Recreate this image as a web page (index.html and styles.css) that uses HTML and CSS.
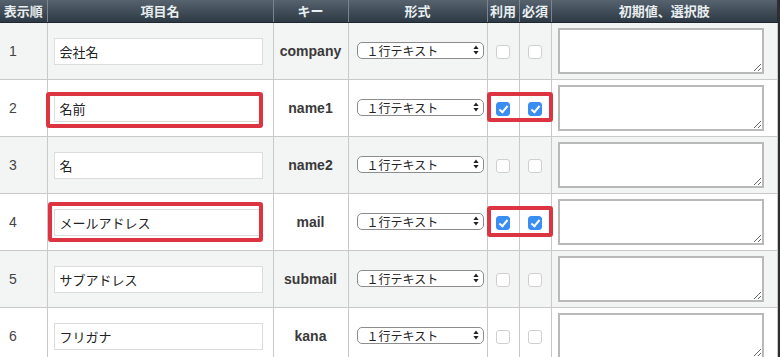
FILE: index.html
```html
<!DOCTYPE html>
<html lang="ja">
<head>
    <meta charset="UTF-8">
    <meta name="viewport" content="width=device-width, initial-scale=1.0">
    <title>項目設定</title>
    <link rel="stylesheet" href="styles.css">
</head>
<body>
    <div class="sheet">
        <table class="fields">
            <colgroup>
                <col class="c-order">
                <col class="c-label">
                <col class="c-key">
                <col class="c-type">
                <col class="c-flag">
                <col class="c-flag">
                <col class="c-value">
            </colgroup>
            <thead>
                <tr>
                    <th>表示順</th>
                    <th>項目名</th>
                    <th>キー</th>
                    <th>形式</th>
                    <th>利用</th>
                    <th>必須</th>
                    <th>初期値、選択肢</th>
                </tr>
            </thead>
            <tbody>
                <tr>
                    <td class="num">1</td>
                    <td><input class="label-input" type="text" value="会社名"></td>
                    <td class="key">company</td>
                    <td><span class="select-wrap"><select class="type-select"><option>１行テキスト</option></select><svg class="arrows" viewBox="0 0 6 10" width="6" height="10"><path d="M3 0.5 L5.6 4 H0.4 Z M3 9.5 L5.6 6 H0.4 Z" fill="#222"/></svg></span></td>
                    <td class="flag"><input type="checkbox" class="chk"></td>
                    <td class="flag"><input type="checkbox" class="chk"></td>
                    <td class="value"><textarea class="value-area"></textarea></td>
                </tr>
                <tr>
                    <td class="num">2</td>
                    <td><input class="label-input" type="text" value="名前"></td>
                    <td class="key">name1</td>
                    <td><span class="select-wrap"><select class="type-select"><option>１行テキスト</option></select><svg class="arrows" viewBox="0 0 6 10" width="6" height="10"><path d="M3 0.5 L5.6 4 H0.4 Z M3 9.5 L5.6 6 H0.4 Z" fill="#222"/></svg></span></td>
                    <td class="flag"><input type="checkbox" class="chk" checked></td>
                    <td class="flag"><input type="checkbox" class="chk" checked></td>
                    <td class="value"><textarea class="value-area"></textarea></td>
                </tr>
                <tr>
                    <td class="num">3</td>
                    <td><input class="label-input" type="text" value="名"></td>
                    <td class="key">name2</td>
                    <td><span class="select-wrap"><select class="type-select"><option>１行テキスト</option></select><svg class="arrows" viewBox="0 0 6 10" width="6" height="10"><path d="M3 0.5 L5.6 4 H0.4 Z M3 9.5 L5.6 6 H0.4 Z" fill="#222"/></svg></span></td>
                    <td class="flag"><input type="checkbox" class="chk"></td>
                    <td class="flag"><input type="checkbox" class="chk"></td>
                    <td class="value"><textarea class="value-area"></textarea></td>
                </tr>
                <tr>
                    <td class="num">4</td>
                    <td><input class="label-input" type="text" value="メールアドレス"></td>
                    <td class="key">mail</td>
                    <td><span class="select-wrap"><select class="type-select"><option>１行テキスト</option></select><svg class="arrows" viewBox="0 0 6 10" width="6" height="10"><path d="M3 0.5 L5.6 4 H0.4 Z M3 9.5 L5.6 6 H0.4 Z" fill="#222"/></svg></span></td>
                    <td class="flag"><input type="checkbox" class="chk" checked></td>
                    <td class="flag"><input type="checkbox" class="chk" checked></td>
                    <td class="value"><textarea class="value-area"></textarea></td>
                </tr>
                <tr>
                    <td class="num">5</td>
                    <td><input class="label-input" type="text" value="サブアドレス"></td>
                    <td class="key">submail</td>
                    <td><span class="select-wrap"><select class="type-select"><option>１行テキスト</option></select><svg class="arrows" viewBox="0 0 6 10" width="6" height="10"><path d="M3 0.5 L5.6 4 H0.4 Z M3 9.5 L5.6 6 H0.4 Z" fill="#222"/></svg></span></td>
                    <td class="flag"><input type="checkbox" class="chk"></td>
                    <td class="flag"><input type="checkbox" class="chk"></td>
                    <td class="value"><textarea class="value-area"></textarea></td>
                </tr>
                <tr>
                    <td class="num">6</td>
                    <td><input class="label-input" type="text" value="フリガナ"></td>
                    <td class="key">kana</td>
                    <td><span class="select-wrap"><select class="type-select"><option>１行テキスト</option></select><svg class="arrows" viewBox="0 0 6 10" width="6" height="10"><path d="M3 0.5 L5.6 4 H0.4 Z M3 9.5 L5.6 6 H0.4 Z" fill="#222"/></svg></span></td>
                    <td class="flag"><input type="checkbox" class="chk"></td>
                    <td class="flag"><input type="checkbox" class="chk"></td>
                    <td class="value"><textarea class="value-area"></textarea></td>
                </tr>
            </tbody>
        </table>

        <!-- annotation boxes -->
        <div class="mark mark-name2"></div>
        <div class="mark mark-flags2"></div>
        <div class="mark mark-mail"></div>
        <div class="mark mark-flags4"></div>
    </div>
</body>
</html>
```

FILE: styles.css
```css
:root {
    --line: #c9c9c9;
    --row-alt: #f3f4f4;
    --mark: #dc3441;
    --text: #333;
}

body {
    margin: 0;
    background: #2e2e2e;
    font-family: "Liberation Sans", "Noto Sans CJK JP", sans-serif;
    color: var(--text);
    height: 357px;
    overflow: hidden;
}

.sheet {
    position: relative;
    width: 777px;
    background: #fff;
}

.fields {
    width: 777px;
    border-collapse: collapse;
    table-layout: fixed;
}

.c-order { width: 47px; }
.c-label { width: 226px; }
.c-key { width: 75px; }
.c-type { width: 139px; }
.c-flag { width: 32px; }
.c-value { width: 226px; }

.fields th {
    height: 22px;
    padding: 0;
    background: linear-gradient(#56636e, #2d3944);
    color: #e9eef1;
    font-family: "Noto Sans CJK JP", sans-serif;
    font-size: 13px;
    font-weight: bold;
    line-height: 22px;
    text-align: center;
    border-left: 1px solid #7a858e;
    border-bottom: 1px solid #1f2830;
    white-space: nowrap;
    overflow: hidden;
}

.fields th:first-child {
    border-left: none;
}

.fields td {
    height: 56px;
    padding: 0 6px;
    border: 1px solid var(--line);
    vertical-align: middle;
}

.fields td:first-child {
    border-left: none;
}

.fields tbody tr:nth-child(odd) td {
    background: var(--row-alt);
}

.fields tbody tr:nth-child(even) td {
    background: #fff;
}

.num {
    font-size: 14px;
    padding-left: 9px !important;
    color: #444;
}

.key {
    text-align: center;
    font-size: 14px;
    font-weight: bold;
    color: #3a3a3a;
}

.label-input {
    box-sizing: border-box;
    width: 209px;
    height: 27px;
    padding: 0 5px;
    border: 1px solid #dcdcdc;
    background: #fff;
    font-family: "Noto Sans CJK JP", sans-serif;
    font-size: 13px;
    color: #222;
    outline: none;
}

.select-wrap {
    position: relative;
    display: inline-block;
    margin-left: 2px;
}

.type-select {
    appearance: none;
    -webkit-appearance: none;
    box-sizing: border-box;
    width: 127px;
    height: 17px;
    padding: 0 0 0 9px;
    border: 1px solid #8c8c8c;
    border-radius: 5px;
    background: #fff;
    font-family: "Noto Sans CJK JP", sans-serif;
    font-size: 12px;
    line-height: 15px;
    color: #222;
    display: block;
}

.arrows {
    position: absolute;
    right: 5px;
    top: 3px;
    pointer-events: none;
}

.flag {
    text-align: center;
    padding: 0 !important;
}

.chk {
    appearance: none;
    -webkit-appearance: none;
    width: 14px;
    height: 14px;
    margin: 0;
    border: 1px solid #cfcfcf;
    border-radius: 3px;
    background: #fff;
    vertical-align: middle;
    position: relative;
}

.chk:checked {
    background: #3a8ef3;
    border-color: #3a8ef3;
}

.chk:checked::after {
    content: '';
    position: absolute;
    left: 4px;
    top: 1px;
    width: 3px;
    height: 7px;
    border: solid #fff;
    border-width: 0 2px 2px 0;
    transform: rotate(40deg);
}

.value {
    padding: 0 6px !important;
}

.value-area {
    display: block;
    box-sizing: border-box;
    width: 206px;
    height: 46px;
    margin: 0;
    border: 2px solid #b9b9b9;
    background: #fff;
    resize: both;
}

/* red annotation frames laid over the form */
.mark {
    position: absolute;
    border: 4px solid var(--mark);
    border-radius: 3px;
    box-sizing: border-box;
}

.mark-name2 {
    left: 46px;
    top: 92px;
    width: 217px;
    height: 36px;
}

.mark-mail {
    left: 48px;
    top: 202px;
    width: 215px;
    height: 40px;
}

.mark-flags2 {
    left: 487px;
    top: 92px;
    width: 66px;
    height: 30px;
}

.mark-flags4 {
    left: 487px;
    top: 206px;
    width: 66px;
    height: 31px;
}
```
